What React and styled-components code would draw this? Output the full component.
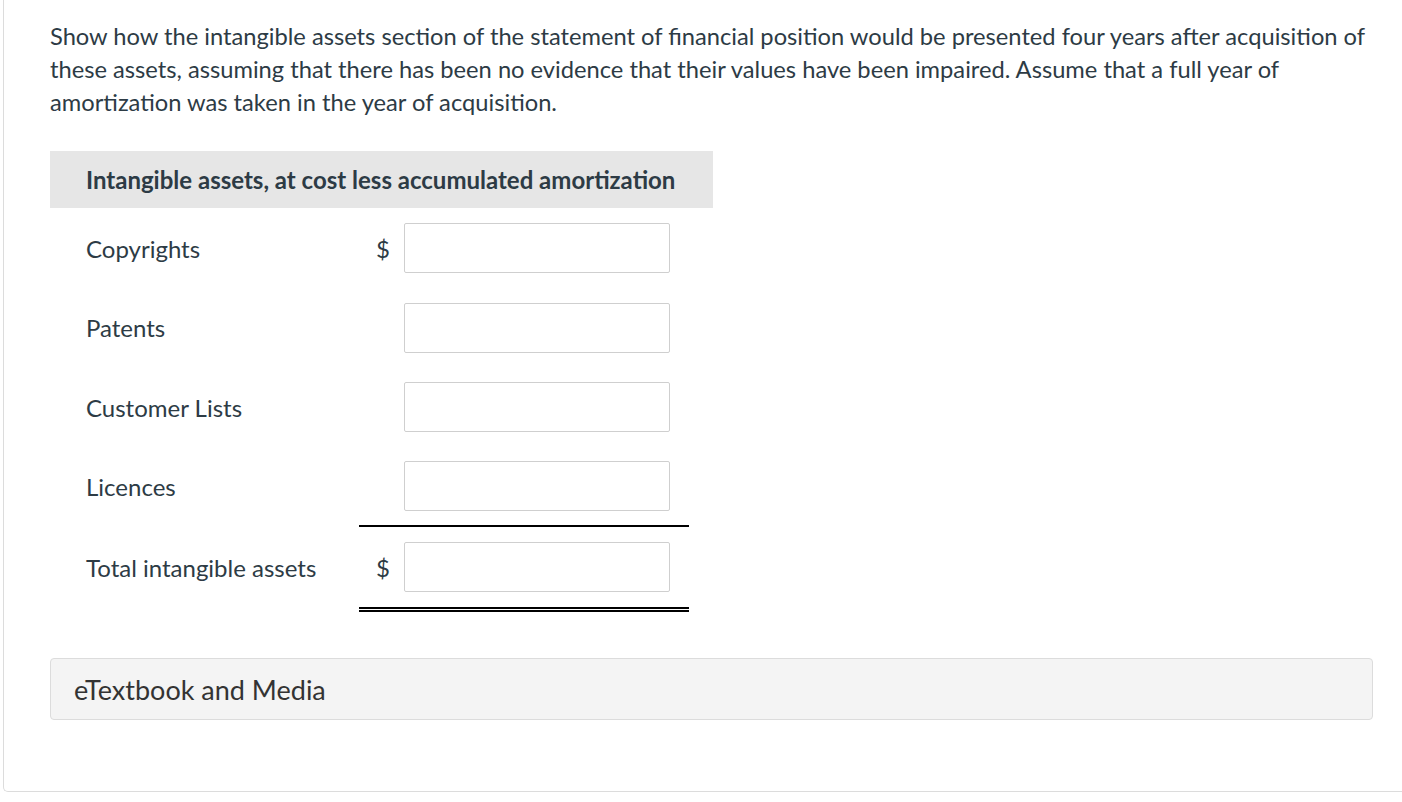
import React from "react";
import styled, { createGlobalStyle } from "styled-components";

const Global = createGlobalStyle`
  html, body { margin: 0; padding: 0; background: #ffffff; }
  body { font-family: Lato, "Open Sans", "Liberation Sans", sans-serif; color: #2d3b45; overflow: hidden; }
  * { box-sizing: border-box; }
`;

const Card = styled.div`
  margin-left: 3px;
  margin-right: -20px;
  height: 792px;
  border-left: 1px solid #dcdcdc;
  border-bottom: 1px solid #dcdcdc;
  border-bottom-left-radius: 5px;
  padding: 20px 20px 0 46px;
`;

const Prompt = styled.p`
  margin: 0 0 32px;
  font-size: 23.7px;
  line-height: 33px;
  max-width: 1345px;
`;

const Statement = styled.div`
  width: 663px;
`;

const Header = styled.div`
  background: #e6e6e6;
  height: 57px;
  display: flex;
  align-items: center;
  padding-left: 36px;
  font-size: 24px;
  font-weight: 700;
`;

const Row = styled.div`
  display: grid;
  grid-template-columns: 273px 45px 266px 19px;
  align-items: center;
  height: ${p => p.$h}px;
  padding-left: 36px;
`;

const Label = styled.div`
  font-size: 24px;
`;

const Dollar = styled.div`
  font-size: 24px;
  text-align: right;
  padding-right: 14px;
`;

const Amount = styled.input`
  width: 266px;
  height: 50px;
  border: 1px solid #cfcfcf;
  border-radius: 2px;
  background: #fff;
  font-family: inherit;
  font-size: 20px;
  padding: 0 10px;
  outline: none;
`;

const RuleRow = styled.div`
  margin-left: 309px;
  width: 330px;
  border-top: ${p => (p.$double ? "5px double #000" : "2px solid #000")};
`;

const Media = styled.div`
  margin-top: ${p => p.$top}px;
  height: 62px;
  width: 1323px;
  background: #f4f4f4;
  border: 1px solid #dcdcdc;
  border-radius: 4px;
  display: flex;
  align-items: center;
  padding-left: 23px;
  font-size: 27px;
  color: #333;
`;

const rows = [
  { label: "Copyrights", dollar: true, h: 80 },
  { label: "Patents", h: 79 },
  { label: "Customer Lists", h: 80 },
  { label: "Licences", h: 78 },
];

export default function App() {
  return (
    <>
      <Global />
      <Card>
        <Prompt>
          Show how the intangible assets section of the statement of financial position would be presented four years after acquisition of these assets, assuming that there has been no evidence that their values have been impaired. Assume that a full year of amortization was taken in the year of acquisition.
        </Prompt>
        <Statement>
          <Header>Intangible assets, at cost less accumulated amortization</Header>
          {rows.map(r => (
            <Row key={r.label} $h={r.h}>
              <Label>{r.label}</Label>
              <Dollar>{r.dollar ? "$" : ""}</Dollar>
              <Amount type="text" />
              <span />
            </Row>
          ))}
          <RuleRow />
          <Row $h={80}>
            <Label>Total intangible assets</Label>
            <Dollar>$</Dollar>
            <Amount type="text" />
            <span />
          </Row>
          <RuleRow $double />
        </Statement>
        <Media $top={46}>eTextbook and Media</Media>
      </Card>
    </>
  );
}
